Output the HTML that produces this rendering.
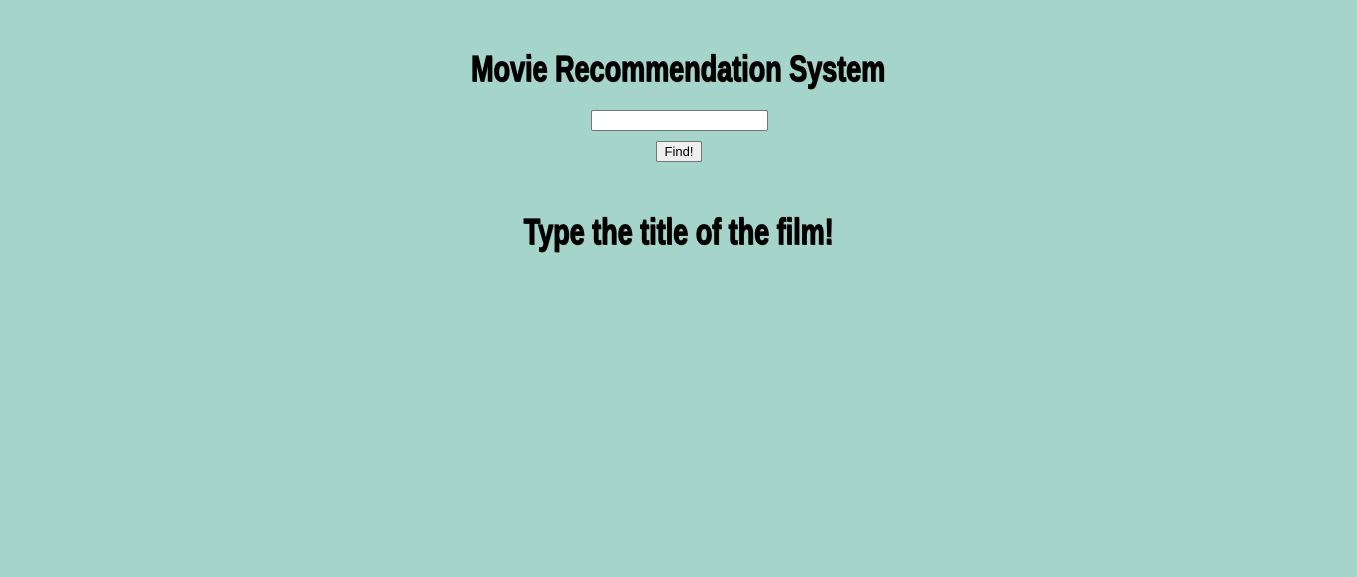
<!DOCTYPE html>
<html><head><style>
html,body{margin:0;padding:0;background:#a5d4ca;width:1357px;height:577px;overflow:hidden}
.h{position:absolute;left:0;width:1357px;text-align:center;font-family:"Liberation Sans",sans-serif;font-weight:bold;font-size:36px;line-height:40px;color:#000}
.h span{display:inline-block;transform:scaleX(0.75);-webkit-text-stroke:1.2px #000;text-shadow:1px 1px 0 #3a3a20}
input{position:absolute;left:591px;top:110px;width:177px;height:21px;box-sizing:border-box;border:1px solid #767676;background:#fff;border-radius:2px;padding:0;margin:0}
button{position:absolute;left:656px;top:141px;width:46px;height:21px;box-sizing:border-box;border:1px solid #767676;background:#efefef;border-radius:2px;font-family:"Liberation Sans",sans-serif;font-size:13px;padding:0;margin:0;color:#000}
</style></head><body>
<div class="h" style="top:49px"><span>Movie Recommendation System</span></div>
<input type="text">
<button>Find!</button>
<div class="h" style="top:212px"><span>Type the title of the film!</span></div>
</body></html>
